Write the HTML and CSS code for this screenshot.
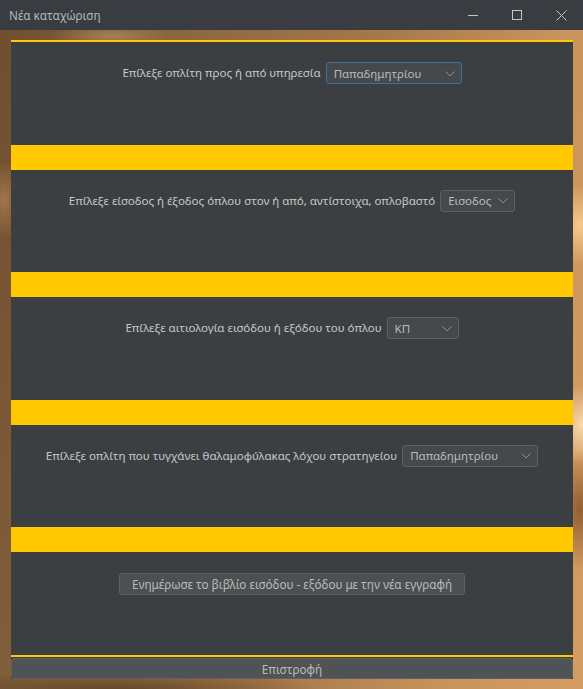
FILE: index.html
```html
<!DOCTYPE html>
<html lang="el">
<head>
<meta charset="utf-8">
<title>Νέα καταχώριση</title>
<link rel="stylesheet" href="styles.css">
</head>
<body>
<div class="window">
  <div class="titlebar">
    <span class="title">Νέα καταχώριση</span>
    <div class="controls">
      <div class="ctl"><svg width="10" height="10" viewBox="0 0 10 10"><line x1="0" y1="5.5" x2="10" y2="5.5" stroke="#c4c6c8" stroke-width="1"/></svg></div>
      <div class="ctl"><svg width="10" height="10" viewBox="0 0 10 10"><rect x="0.5" y="0.5" width="9" height="9" fill="none" stroke="#c4c6c8" stroke-width="1"/></svg></div>
      <div class="ctl"><svg width="11" height="11" viewBox="0 0 11 11"><path d="M0.5 0.5 L10.5 10.5 M10.5 0.5 L0.5 10.5" stroke="#c4c6c8" stroke-width="1"/></svg></div>
    </div>
  </div>
  <div class="frame">
    <div class="panel">
      <div class="sections">
        <section class="row">
          <span class="label">Επίλεξε οπλίτη προς ή από υπηρεσία</span>
          <div class="combo focused w136"><span class="val">Παπαδημητρίου</span><svg class="chev" width="10" height="6" viewBox="0 0 10 6"><polyline points="0.5,0.5 5,5 9.5,0.5" fill="none" stroke="#8d9093" stroke-width="1"/></svg></div>
        </section>
        <div class="sep"></div>
        <section class="row">
          <span class="label">Επίλεξε είσοδος ή έξοδος όπλου στον ή από, αντίστοιχα, οπλοβαστό</span>
          <div class="combo w75"><span class="val">Εισοδος</span><svg class="chev" width="10" height="6" viewBox="0 0 10 6"><polyline points="0.5,0.5 5,5 9.5,0.5" fill="none" stroke="#8d9093" stroke-width="1"/></svg></div>
        </section>
        <div class="sep"></div>
        <section class="row">
          <span class="label">Επίλεξε αιτιολογία εισόδου ή εξόδου του όπλου</span>
          <div class="combo w72"><span class="val">ΚΠ</span><svg class="chev" width="10" height="6" viewBox="0 0 10 6"><polyline points="0.5,0.5 5,5 9.5,0.5" fill="none" stroke="#8d9093" stroke-width="1"/></svg></div>
        </section>
        <div class="sep"></div>
        <section class="row">
          <span class="label">Επίλεξε οπλίτη που τυγχάνει θαλαμοφύλακας λόχου στρατηγείου</span>
          <div class="combo w136"><span class="val">Παπαδημητρίου</span><svg class="chev" width="10" height="6" viewBox="0 0 10 6"><polyline points="0.5,0.5 5,5 9.5,0.5" fill="none" stroke="#8d9093" stroke-width="1"/></svg></div>
        </section>
        <div class="sep"></div>
        <section class="row">
          <button class="btn update">Ενημέρωσε το βιβλίο εισόδου - εξόδου με την νέα εγγραφή</button>
        </section>
      </div>
      <button class="btn back">Επιστροφή</button>
    </div>
  </div>
</div>
</body>
</html>
```

FILE: styles.css
```css
* { box-sizing: border-box; }
html, body { margin: 0; padding: 0; height: 100%; }
body {
  font-family: "Noto Sans", "Open Sans", sans-serif;
  font-size: 11.5px;
  color: #bbbbbb;
  background: #3a3e42;
}
.window {
  height: 689px;
  display: flex;
  flex-direction: column;
}
.titlebar {
  height: 30px;
  flex: none;
  background: #393d41;
  display: flex;
  align-items: center;
  justify-content: space-between;
}
.title {
  padding-left: 9px;
  color: #b3b7bb;
  font-size: 11.7px;
  padding-bottom: 1px;
}
.controls { display: flex; height: 100%; }
.ctl {
  width: 44px;
  height: 100%;
  display: flex;
  align-items: center;
  justify-content: center;
}
.ctl svg { display: block; }
.frame {
  flex: 1;
  padding: 10px 10px 10px 11px;
  display: flex;
  background:
    radial-gradient(ellipse 30px 40px at 580px 195px, rgba(255, 210, 150, 0.85), transparent),
    radial-gradient(ellipse 30px 40px at 582px 395px, rgba(255, 225, 180, 0.9), transparent),
    radial-gradient(ellipse 60px 12px at 110px 6px, rgba(190, 150, 110, 0.6), transparent),
    radial-gradient(ellipse 20px 40px at 4px 170px, rgba(190, 140, 90, 0.6), transparent),
    radial-gradient(ellipse 30px 60px at 580px 480px, rgba(120, 70, 30, 0.7), transparent),
    radial-gradient(ellipse 200px 20px at 120px 660px, rgba(80, 55, 25, 0.7), transparent),
    linear-gradient(100deg, #6f4e2e 0%, #8a6641 25%, #a6784c 55%, #c8945c 80%, #d49c62 100%);
}
.panel {
  flex: 1;
  display: flex;
  flex-direction: column;
  background: #3c3f41;
  border-top: 2px solid #ffc800;
}
.sections {
  flex: 1;
  display: flex;
  flex-direction: column;
  border-bottom: 2px solid #ffc800;
}
.row {
  flex: 1;
  display: flex;
  justify-content: center;
  align-items: flex-start;
  gap: 5px;
  padding-top: 20px;
}
.sep {
  height: 25px;
  flex: none;
  background: #ffc800;
}
.label {
  line-height: 22px;
  color: #c8c8c8;
  white-space: nowrap;
}
.combo {
  height: 22px;
  border: 1px solid #5e6164;
  border-radius: 3px;
  background: #46494b;
  display: flex;
  align-items: center;
  justify-content: space-between;
  padding: 0 6px 0 7px;
}
.combo.focused { border-color: #466d94; }
.combo .val { color: #bbbbbb; white-space: nowrap; }
.chev { display: block; margin-top: 1px; }
.w136 { width: 136px; }
.w75 { width: 75px; }
.w72 { width: 72px; }
.btn {
  font-family: inherit;
  font-size: 11.7px;
  color: #bbbbbb;
  background: #4c5052;
  border: 1px solid #5e6164;
  border-radius: 3px;
  height: 22px;
  padding: 0;
  display: flex;
  align-items: center;
  justify-content: center;
}
.update { width: 346px; margin-top: 1px; }
.back {
  flex: none;
  width: 100%;
  height: 21px;
  margin-top: 1px;
  background: #505355;
}
```
